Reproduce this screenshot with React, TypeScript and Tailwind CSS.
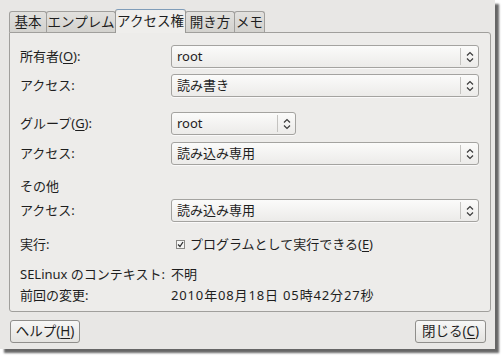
import React from "react";

const font = { fontFamily: '"Noto Sans", "Noto Sans CJK JP", sans-serif' };

function Arrows() {
  return (
    <svg width="8" height="12" viewBox="0 0 8 12" fill="none" stroke="#3a3a3a" strokeWidth="1.2">
      <path d="M1 4.5 L4 1.5 L7 4.5" />
      <path d="M1 7.5 L4 10.5 L7 7.5" />
    </svg>
  );
}

function Combo({ text, narrow }: { text: string; narrow?: boolean }) {
  return (
    <div
      className={`${narrow ? "w-[125px]" : "w-[308px]"} h-[23px] flex items-center rounded-[3px] border border-[#a4a3a0] bg-gradient-to-b from-[#fbfbfa] to-[#ecebe9] shadow-[0_1px_0_rgba(255,255,255,0.7)]`}
    >
      <span className="flex-1 pl-[5px] text-[13px] text-[#1e1e1e] leading-none">{text}</span>
      <div className="h-[17px] w-px bg-[#c4c3c0]" />
      <div className="w-[17px] flex items-center justify-center">
        <Arrows />
      </div>
    </div>
  );
}

function U({ c }: { c: string }) {
  return <span className="underline underline-offset-2 decoration-1">{c}</span>;
}

function Row({ label, children, cls }: { label: React.ReactNode; children?: React.ReactNode; cls: string }) {
  return (
    <div className={`flex items-center ${cls}`}>
      <div className="w-[151px] text-[13px] text-[#1e1e1e] leading-none">{label}</div>
      {children}
    </div>
  );
}

function Tab({ text, active, w }: { text: string; active?: boolean; w: string }) {
  if (active) {
    return (
      <div
        className={`${w} h-[24px] -mb-px relative z-10 flex items-center justify-center rounded-t-[3px] border border-b-0 border-[#9a9996] border-t-[#7f9db9] bg-[#efeeec] text-[13.5px] text-[#1e1e1e]`}
      >
        {text}
      </div>
    );
  }
  return (
    <div
      className={`${w} h-[21px] flex items-center justify-center rounded-t-[3px] border border-b-0 border-[#a09f9c] bg-gradient-to-b from-[#e2e1de] to-[#d3d2ce] text-[13.5px] text-[#1e1e1e] -ml-px first:ml-0`}
    >
      {text}
    </div>
  );
}

export default function App() {
  return (
    <div className="w-[504px] h-[356px] bg-white" style={font}>
      <div className="w-[495px] h-[349px] bg-[#e8e7e5] shadow-[4px_4px_2px_rgba(0,0,0,0.6)] flex flex-col pt-[8px] px-[9px]">
        <div className="flex items-end h-[24px]">
          <Tab text="基本" w="w-[38px]" />
          <Tab text="エンプレム" w="w-[70px]" />
          <Tab text="アクセス権" w="w-[71px] -ml-px" active />
          <Tab text="開き方" w="w-[50px]" />
          <Tab text="メモ" w="w-[31px]" />
        </div>
        <div className="w-[482px] h-[280px] border border-[#a09f9c] rounded-b-[3px] rounded-tr-[3px] bg-[#edecea] pl-[10px] pt-[12px] flex flex-col">
          <Row label={<>所有者(<U c="O" />):</>} cls="h-[23px]">
            <Combo text="root" />
          </Row>
          <Row label="アクセス:" cls="h-[23px] mt-[6px]">
            <Combo text="読み書き" />
          </Row>
          <Row label={<>グループ(<U c="G" />):</>} cls="h-[23px] mt-[15px]">
            <Combo text="root" narrow />
          </Row>
          <Row label="アクセス:" cls="h-[23px] mt-[7px]">
            <Combo text="読み込み専用" />
          </Row>
          <div className="h-[18px] mt-[12px] flex items-center text-[13px] text-[#1e1e1e] leading-none">その他</div>
          <Row label="アクセス:" cls="h-[23px] mt-[4px]">
            <Combo text="読み込み専用" />
          </Row>
          <Row label="実行:" cls="h-[18px] mt-[13px]">
            <div className="flex items-center text-[13px] text-[#1e1e1e] leading-none">
              <div className="ml-[5px] w-[9px] h-[9px] border border-[#8a8986] bg-[#f6f6f5] flex items-center justify-center">
                <svg width="7" height="7" viewBox="0 0 7 7" fill="none" stroke="#333" strokeWidth="1.3">
                  <path d="M1 3.5 L3 5.5 L6 1" />
                </svg>
              </div>
              <span className="ml-[5px]">
                プログラムとして実行できる(<U c="E" />)
              </span>
            </div>
          </Row>
          <Row label="SELinux のコンテキスト:" cls="h-[18px] mt-[12px]">
            <span className="text-[13px] text-[#1e1e1e] leading-none">不明</span>
          </Row>
          <Row label="前回の変更:" cls="h-[18px] mt-[3px]">
            <span className="text-[13px] text-[#1e1e1e] leading-none tracking-[0.85px]">2010年08月18日 05時42分27秒</span>
          </Row>
        </div>
        <div className="flex justify-between mt-[8px] pl-[1px]">
          <button className="w-[70px] h-[23px] rounded-[3px] border border-[#8f8e8b] bg-gradient-to-b from-[#f7f7f6] to-[#e4e3e0] text-[13.5px] text-[#1e1e1e] leading-none">
            ヘルプ(<U c="H" />)
          </button>
          <button className="w-[71px] h-[23px] rounded-[3px] border border-[#8f8e8b] bg-gradient-to-b from-[#f7f7f6] to-[#e4e3e0] text-[13.5px] text-[#1e1e1e] leading-none">
            閉じる(<U c="C" />)
          </button>
        </div>
      </div>
    </div>
  );
}
